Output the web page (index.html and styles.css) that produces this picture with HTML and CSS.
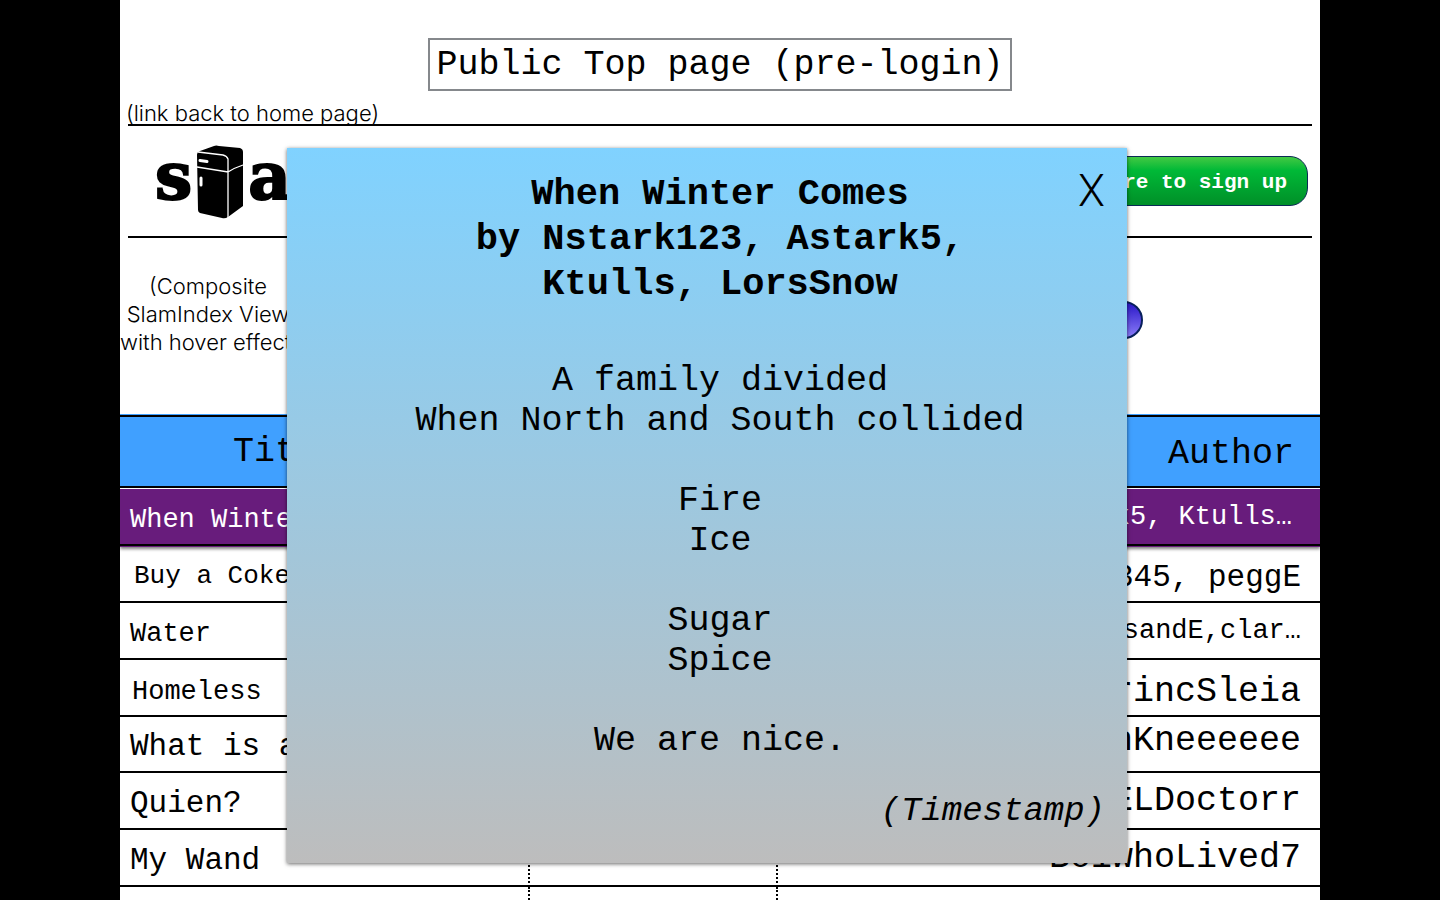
FILE: index.html
```html
<!DOCTYPE html>
<html lang="en">
<head>
<meta charset="utf-8">
<title>Public Top page</title>
<link rel="stylesheet" href="styles.css">
</head>
<body>
<div class="page">
  <h1 class="page-title">Public Top page (pre-login)</h1>
  <p class="home-note">(link back to home page)</p>
  <header class="banner">
    <a class="logo" href="#">
      <span>s</span>
      <svg class="fridge" viewBox="0 0 48 74" aria-hidden="true">
        <path d="M1 10Q1 7 4 6L18 1Q20 0 23 1L44 3Q47 4 47 7V61L32 72Q29 74 26 73L4 68Q2 67 2 65Z"/>
        <g fill="none" stroke="#fff" stroke-width="1.3">
          <path d="M2 7L27 10Q31 11 32 14V73M1 22L32 27Q38 23 47 20"/>
          <path d="M4 15.500L11 16.500" stroke-width="3" stroke-linecap="round"/>
          <path d="M5 33V40" stroke-width="3" stroke-linecap="round"/>
        </g>
      </svg>
      <span>am</span>
    </a>
    <button class="signup" type="button">Click here to sign up</button>
  </header>
  <section class="intro">
    <p class="intro-note">(Composite<br>SlamIndex View<br>with hover effect)</p>
    <button class="pill" type="button">Search</button>
  </section>
  <table class="slams">
    <thead>
      <tr><th class="col-title">Title</th><th class="col-mid"></th><th class="col-author">Author</th></tr>
    </thead>
    <tbody>
      <tr class="active"><td>When Winter Comes</td><td></td><td class="small inset">Astark5, Ktulls…</td></tr>
      <tr><td class="compact">Buy a Coke</td><td></td><td class="medium low">345, peggE</td></tr>
      <tr><td>Water</td><td></td><td class="small">sandE,clar…</td></tr>
      <tr><td class="indent">Homeless</td><td></td><td class="low">princSleia</td></tr>
      <tr class="short"><td class="medium">What is a</td><td></td><td class="high">nKneeeeee</td></tr>
      <tr><td class="medium">Quien?</td><td></td><td>ELDoctorr</td></tr>
      <tr><td class="medium">My Wand</td><td></td><td>BoiwhoLived7</td></tr>
      <tr><td></td><td></td><td></td></tr>
    </tbody>
  </table>

  <div class="modal" role="dialog" aria-labelledby="slam-title">
    <button class="close" type="button">X</button>
    <h2 id="slam-title">When Winter Comes<br>by Nstark123, Astark5,<br>Ktulls, LorsSnow</h2>
    <div class="poem">
      <p>A family divided<br>When North and South collided</p>
      <p>Fire<br>Ice</p>
      <p>Sugar<br>Spice</p>
      <p>We are nice.</p>
    </div>
    <p class="timestamp">(Timestamp)</p>
  </div>
</div>
</body>
</html>
```
FILE: styles.css
```css
* { box-sizing: border-box; }

body {
  margin: 0;
  background: #000;
  color: #000;
  font-family: "Liberation Mono", monospace;
}

h1, h2, p { margin: 0; font-weight: 400; }

button { border: 0; padding: 0; font: inherit; cursor: pointer; }

.page {
  position: relative;
  max-width: 1200px;
  height: 100vh;
  margin: 0 auto;
  padding-top: 38px;
  overflow: hidden;
  background: #fff;
}

.page-title {
  width: fit-content;
  margin: 0 auto;
  padding: 1px 6px 0;
  border: 2px solid #85888c;
  font-size: 35px;
  line-height: 48px;
  white-space: nowrap;
}

.home-note,
.intro-note {
  font-family: Inter, "Liberation Sans", sans-serif;
  font-size: 22px;
  font-weight: 300;
}

.home-note {
  margin: 11px 0 0 6px;
  line-height: 22px;
}

.banner {
  display: flex;
  align-items: flex-start;
  justify-content: space-between;
  height: 114px;
  margin: 0 8px;
  border: solid #000;
  border-width: 2px 0;
}

.logo {
  display: flex;
  align-items: flex-start;
  gap: 4px;
  padding: 19px 0 0 27px;
  color: #000;
  font-family: "DejaVu Serif", serif;
  font-size: 66px;
  font-weight: 700;
  line-height: 62px;
  text-decoration: none;
  -webkit-text-stroke: 2px #000;
}

.fridge { width: 48px; height: 74px; }

.signup {
  height: 50px;
  margin: 30px 4px 0 0;
  padding: 2px 20px 0;
  border: 1px solid #0b2a55;
  border-radius: 18px;
  background: linear-gradient(#43c943, #00b937 28%, #008f28);
  color: #fff;
  font-size: 21px;
  font-weight: 700;
}

.intro {
  display: flex;
  align-items: flex-start;
  justify-content: space-between;
  height: 176px;
  padding: 34px 177px 0 0;
}

.intro-note {
  width: 176px;
  line-height: 28px;
  text-align: center;
  white-space: nowrap;
}

.pill {
  width: 200px;
  height: 38px;
  margin-top: 29px;
  border: 2px solid #08205c;
  border-radius: 19px;
  background: linear-gradient(#2a17c8, #8a7cf8);
  color: #fff;
  font-size: 21px;
}

.slams {
  width: 100%;
  border-top: 1px solid #40a0ff;
  border-spacing: 0;
  table-layout: fixed;
}

.slams th {
  height: 73px;
  padding: 0;
  border: solid #000;
  border-width: 2px 0;
  background: #40a0ff;
  font-size: 35px;
  font-weight: 400;
  line-height: 40px;
}

.slams .col-title { width: 34%; padding: 0 0 0 113px; text-align: left; }
.slams .col-mid { width: 20.7%; }
.slams .col-author { padding: 5px 26px 0 0; text-align: right; }

.slams td {
  height: 57px;
  padding: 0 0 4px 10px;
  border-bottom: 2px solid #000;
  font-size: 27px;
  line-height: 40px;
  vertical-align: bottom;
  white-space: nowrap;
}

.slams td + td { border-left: 2px dotted #000; }

.slams td:last-child {
  padding: 0 19px 7px 0;
  font-size: 35px;
  text-align: right;
}

.slams .compact { padding: 0 0 5px 14px; font-size: 26px; }
.slams .indent { padding: 0 0 3px 12px; }
.slams .medium, .slams td.medium:last-child { font-size: 31px; }
.slams td.small:last-child { font-size: 27px; }
.slams td.inset:last-child { padding-right: 28px; }
.slams td.low:last-child { padding-bottom: 3px; }
.slams td.high:last-child { padding-bottom: 10px; }

.slams .short td { height: 56px; }

.slams .active {
  position: relative;
  box-shadow: 0 1px 0 #681c7c, 0 3px 3px rgba(0, 0, 0, 0.5);
}

.slams .active td {
  height: 58px;
  border-top: 1px solid #fff;
  border-left: 0;
  background: #681c7c;
  background-clip: padding-box;
  color: #fff;
}

.modal {
  position: absolute;
  top: 148px;
  left: 167px;
  width: 70%;
  padding: 24px 22px 32px 48px;
  background: linear-gradient(#80d2ff, #bdbdbd);
  box-shadow: 0 1px 4px rgba(0, 0, 0, 0.6);
  text-align: center;
}

.modal h2 {
  font-size: 37px;
  font-weight: 700;
  line-height: 45px;
}

.close {
  position: absolute;
  top: 17px;
  right: 22px;
  background: none;
  color: #000;
  font-family: Roboto, "Liberation Sans", sans-serif;
  font-size: 44px;
  font-weight: 300;
  line-height: 52px;
}

.poem {
  display: grid;
  gap: 40px;
  margin-top: 54px;
  font-size: 35px;
  line-height: 40px;
}

.timestamp {
  margin-top: 30px;
  font-size: 34px;
  font-style: italic;
  line-height: 40px;
  text-align: right;
}
```
